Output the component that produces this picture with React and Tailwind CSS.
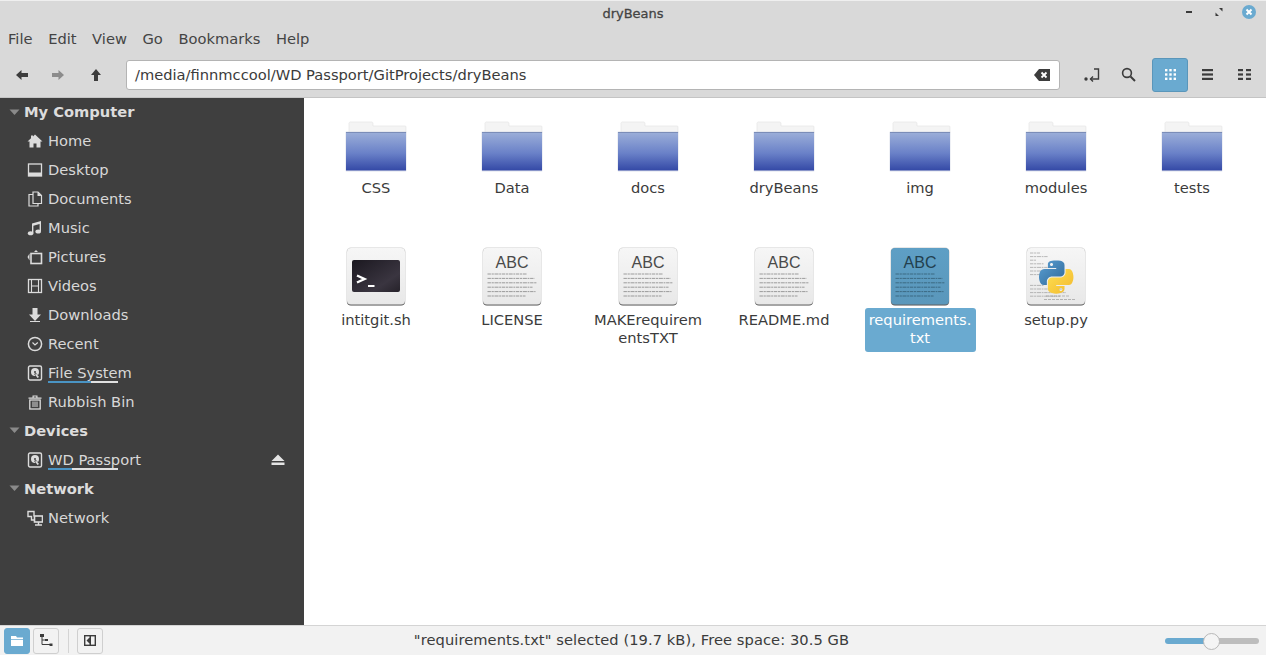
import React from 'react';

const font = { fontFamily: '"DejaVu Sans", sans-serif' };

// Folder icon, drawn in a 64x64 box
const FolderIcon = ({ id }) => (
  <svg width="64" height="64" viewBox="0 0 64 64">
    <defs>
      <linearGradient id={`folder-${id}`} x1="0" y1="0" x2="0" y2="1">
        <stop offset="0" stopColor="#9cafd9" />
        <stop offset="0.55" stopColor="#6a81c8" />
        <stop offset="1" stopColor="#3449a6" />
      </linearGradient>
    </defs>
    <path d="M5 11.5 a1.5 1.5 0 0 1 1.5-1.5 H27.5 a1.5 1.5 0 0 1 1.5 1.5 V14 H61 a1 1 0 0 1 1 1 V21 H5 Z" fill="#f4f4f4" stroke="#e2e2e2" strokeWidth="0.6" />
    <rect x="1.5" y="19.5" width="61" height="40" rx="1" fill="#c9cfdf" opacity="0.6" />
    <rect x="2" y="20" width="60" height="38.5" fill={`url(#folder-${id})`} />
    <rect x="2" y="20" width="60" height="1" fill="#7b8db8" />
  </svg>
);

// Rounded white tile shared by the file icons
const Tile = ({ fill = '#f6f6f6', fillEnd = '#e8e8e8', id, children }) => (
  <svg width="64" height="64" viewBox="0 0 64 64">
    <defs>
      <linearGradient id={`tile-${id}`} x1="0" y1="0" x2="0" y2="1">
        <stop offset="0" stopColor={fill} />
        <stop offset="1" stopColor={fillEnd} />
      </linearGradient>
    </defs>
    <rect x="2.5" y="3.5" width="59" height="58" rx="4.5" fill="#bbbbbb" opacity="0.7" />
    <rect x="3" y="4.5" width="58" height="57" rx="4" fill="#4d4d4d" opacity="0.85" />
    <rect x="3" y="4" width="58" height="56.5" rx="4" fill={`url(#tile-${id})`} />
    {children}
  </svg>
);

const TextLines = ({ color, widths, startY = 30, step = 4.4, x = 7.5, opacity = 0.6 }) => (
  <g stroke={color} strokeWidth="1" strokeDasharray="3.4 0.7 2.2 0.7 4 0.7 1.8 0.7" opacity={opacity}>
    {widths.map((w, i) => (
      <line key={i} x1={x} x2={x + w} y1={startY + i * step} y2={startY + i * step} />
    ))}
  </g>
);

const TextFileIcon = ({ id, selected }) => (
  <Tile id={id} fill={selected ? '#5e9fc5' : '#f6f6f6'} fillEnd={selected ? '#5a97bb' : '#e8e8e8'}>
    <text x="32" y="24" textAnchor="middle" fontSize="16" fill={selected ? '#22404f' : '#4a4a4a'} style={{ fontFamily: '"Liberation Sans", sans-serif' }}>ABC</text>
    <TextLines color={selected ? '#274a5c' : '#666666'} widths={[39, 47, 49, 45, 48, 38]} />
  </Tile>
);

const ScriptIcon = () => (
  <Tile id="sh">
    <defs>
      <linearGradient id="term" x1="0" y1="0" x2="1" y2="1">
        <stop offset="0" stopColor="#1b1820" />
        <stop offset="0.7" stopColor="#3a3540" />
        <stop offset="1" stopColor="#26222a" />
      </linearGradient>
    </defs>
    <rect x="8" y="16" width="48" height="32" rx="2" fill="url(#term)" />
    <path d="M13 31.5 L20.5 35 L13 38.5" fill="none" stroke="#fff" strokeWidth="2.4" />
    <rect x="24" y="41" width="6.5" height="2" fill="#fff" />
  </Tile>
);

const PythonIcon = () => (
  <Tile id="py">
    <defs>
      <linearGradient id="py-blue" x1="0" y1="0" x2="1" y2="1">
        <stop offset="0" stopColor="#5a9fd4" />
        <stop offset="1" stopColor="#306998" />
      </linearGradient>
      <linearGradient id="py-yellow" x1="0" y1="0" x2="1" y2="1">
        <stop offset="0" stopColor="#ffe052" />
        <stop offset="1" stopColor="#f2b92e" />
      </linearGradient>
    </defs>
    <TextLines color="#888888" widths={[10, 18, 6, 14, 26, 34, 28, 0, 0, 14, 32, 36, 30]} startY={9} step={3.6} x={6} opacity={0.55} />
    <g stroke="#888888" strokeWidth="1" strokeDasharray="3 1" opacity="0.55">
      <line x1="22" x2="46" y1="52" y2="52" />
      <line x1="20" x2="52" y1="55.5" y2="55.5" />
    </g>
    <g transform="translate(15 16.5) scale(0.31 0.295)">
      <path fill="url(#py-blue)" d="M54.918785,0.00091927 C50.335132,0.02221727 45.957846,0.41313697 42.106285,1.0946693 30.760069,3.0991731 28.700036,7.2947714 28.700035,15.032169 v10.21875 h26.8125 v3.40625 h-26.8125 -10.0625 c-7.792459,0 -14.6157588,4.683717 -16.7499998,13.59375 -2.46181998,10.212966 -2.57101508,16.586023 0,27.25 1.9059283,7.937852 6.4575432,13.593748 14.2499998,13.59375 h9.21875 v-12.25 c0,-8.849902 7.657144,-16.656248 16.75,-16.65625 h26.78125 c7.454951,0 13.406253,-6.138164 13.40625,-13.625 v-25.53125 c0,-7.2663386 -6.12998,-12.7247771 -13.40625,-13.9374997 C64.281548,0.32794397 59.502438,-0.02037903 54.918785,0.00091927 Z m-14.5,8.21875 c2.769547,0 5.03125,2.2986456 5.03125,5.1249996 -2e-6,2.816336 -2.261703,5.09375 -5.03125,5.09375 -2.779476,-1e-6 -5.03125,-2.277415 -5.03125,-5.09375 -1e-6,-2.826353 2.251774,-5.1249996 5.03125,-5.1249996 Z" />
      <path fill="url(#py-yellow)" d="M85.637535,28.657169 v11.90625 c0,9.230755 -7.825895,16.999999 -16.75,17 h-26.78125 c-7.335833,0 -13.406249,6.278483 -13.40625,13.625 v25.531247 c0,7.266344 6.318588,11.540324 13.40625,13.625004 8.487331,2.49561 16.626237,2.94663 26.78125,0 6.750155,-1.95439 13.406253,-5.88761 13.40625,-13.625004 V86.500919 h-26.78125 v-3.40625 h26.78125 13.406254 c7.792461,0 10.696251,-5.435408 13.406241,-13.59375 2.79933,-8.398886 2.74022,-16.475776 0,-27.25 -1.92578,-7.757441 -5.60387,-13.59375 -13.406241,-13.59375 Z m-15.0625,64.65625 c2.779478,3e-6 5.03125,2.277417 5.03125,5.093747 -2e-6,2.826354 -2.251775,5.125004 -5.03125,5.125004 -2.76955,0 -5.03125,-2.29865 -5.03125,-5.125004 2e-6,-2.81633 2.261697,-5.093747 5.03125,-5.093747 Z" />
    </g>
  </Tile>
);

// Sidebar glyphs, 16x16
const Glyph = ({ children, size = 16, vb = '0 0 16 16' }) => (
  <svg width={size} height={size} viewBox={vb} fill="#dcdcdc" className="shrink-0">{children}</svg>
);

const diskGlyph = (
  <>
    <rect x="1.5" y="1" width="13" height="14" rx="1.5" fill="none" stroke="#dcdcdc" strokeWidth="1.4" />
    <circle cx="8" cy="7" r="4" />
    <circle cx="8" cy="7" r="1" fill="#3f3f3f" />
    <path d="M7 9 L10 12.5 L11.5 11 L9 8 Z" fill="#3f3f3f" />
    <path d="M8 9.5 L10.5 13 L12 12 L9.5 9 Z" />
  </>
);

const sidebarIcons = {
  home: <path d="M8 1.5 L15.5 8.5 H13.5 V14.5 H9.5 V10.5 H6.5 V14.5 H2.5 V8.5 H0.5 L4 5.2 V2.5 H6 V3.4 Z" />,
  desktop: <><rect x="1.5" y="2" width="13" height="12" fill="none" stroke="#dcdcdc" strokeWidth="1.3" /><rect x="2" y="10.5" width="12" height="3.5" /></>,
  documents: <><path d="M6 1 H11 L14.5 4.5 V12.5 H6 Z" fill="none" stroke="#dcdcdc" strokeWidth="1.2" /><path d="M10.5 1 V5 H14.5 Z" /><path d="M6 3.5 H2 V15 H11 V12.5" fill="none" stroke="#dcdcdc" strokeWidth="1.2" /></>,
  music: <><path d="M5 3.5 L14 1 V11 H12.6 V4 L6.4 5.7 V13 H5 Z" /><ellipse cx="3.6" cy="13.2" rx="2.8" ry="2" /><ellipse cx="11.2" cy="11.4" rx="2.8" ry="2" /></>,
  pictures: <><rect x="4" y="4.5" width="10.5" height="10" fill="none" stroke="#dcdcdc" strokeWidth="1.6" /><path d="M7 3 L9 1 L11 3 Z" /><path d="M2.5 4.5 V11.5 L0.5 8 Z" /></>,
  videos: <><rect x="1.5" y="1.5" width="13" height="13" fill="none" stroke="#dcdcdc" strokeWidth="1.3" /><path d="M4.5 1.5 V14.5 M11.5 1.5 V14.5 M5 8 H11" stroke="#dcdcdc" strokeWidth="1.1" /></>,
  downloads: <path d="M5.5 1 H10.5 V7.5 H14 L8 14 L2 7.5 H5.5 Z M3 14 H13 V15 H3 Z" />,
  recent: <><circle cx="8" cy="8" r="6.6" fill="none" stroke="#dcdcdc" strokeWidth="1.5" /><path d="M5.5 6.5 L8 9 L10.8 6.5" fill="none" stroke="#dcdcdc" strokeWidth="1.2" /></>,
  disk: diskGlyph,
  trash: <><path d="M1.5 3.5 H14.5 V4.8 H1.5 Z M5.5 3.5 V1.5 H10.5 V3.5 H9.3 V2.6 H6.7 V3.5 Z" /><rect x="2.8" y="6" width="10.4" height="9" fill="none" stroke="#dcdcdc" strokeWidth="1.3" /><path d="M6 7.5 V13 M8 7.5 V13 M10 7.5 V13" stroke="#dcdcdc" strokeWidth="1" /></>,
  network: <><path d="M7 6.5 V1.5 H1 V6.5 H4.5 V10 H7" fill="none" stroke="#dcdcdc" strokeWidth="1.4" /><rect x="7.5" y="6" width="8" height="6" fill="none" stroke="#dcdcdc" strokeWidth="1.6" /><path d="M11.5 12 V14.5 M8 15 H15" stroke="#dcdcdc" strokeWidth="1.4" /></>,
};

const Arrow = () => (
  <svg width="11" height="7" viewBox="0 0 11 7" className="shrink-0"><path d="M0.5 0.5 H10.5 L5.5 6 Z" fill="#8a8a8a" /></svg>
);

const SidebarHeader = ({ label, first }) => (
  <div className={`flex items-center pl-[9px] gap-[4px] font-bold text-[#dcdcdc] ${first ? 'h-[28px]' : 'h-[29px]'}`}>
    <Arrow />
    <span>{label}</span>
  </div>
);

const SidebarRow = ({ icon, label, usage, eject }) => (
  <div className="flex items-center h-[29px] pl-[27px] pr-[19px] gap-[5px] text-[#d8d8d8]">
    <Glyph>{sidebarIcons[icon]}</Glyph>
    <span className="relative flex-1">
      {label}
      {usage !== undefined && (
        <span className="absolute left-0 top-[19px] w-[70px] h-[2px] bg-[#e0e0e0]">
          <span className="block h-full bg-[#4a94c4]" style={{ width: `${usage}%` }} />
        </span>
      )}
    </span>
    {eject && (
      <svg width="14" height="12" viewBox="0 0 14 12" className="shrink-0">
        <path d="M7 0.5 L13.5 7 H0.5 Z M0.5 8.5 H13.5 V11 H0.5 Z" fill="#e4e4e4" />
      </svg>
    )}
  </div>
);

const Sidebar = () => (
  <aside className="w-[304px] bg-[#3f3f3f] shrink-0">
    <SidebarHeader label="My Computer" first />
    <SidebarRow icon="home" label="Home" />
    <SidebarRow icon="desktop" label="Desktop" />
    <SidebarRow icon="documents" label="Documents" />
    <SidebarRow icon="music" label="Music" />
    <SidebarRow icon="pictures" label="Pictures" />
    <SidebarRow icon="videos" label="Videos" />
    <SidebarRow icon="downloads" label="Downloads" />
    <SidebarRow icon="recent" label="Recent" />
    <SidebarRow icon="disk" label="File System" usage={62} />
    <SidebarRow icon="trash" label="Rubbish Bin" />
    <SidebarHeader label="Devices" />
    <SidebarRow icon="disk" label="WD Passport" usage={34} eject />
    <SidebarHeader label="Network" />
    <SidebarRow icon="network" label="Network" />
  </aside>
);

const files = [
  { name: 'CSS', icon: <FolderIcon id="css" /> },
  { name: 'Data', icon: <FolderIcon id="data" /> },
  { name: 'docs', icon: <FolderIcon id="docs" /> },
  { name: 'dryBeans', icon: <FolderIcon id="drybeans" /> },
  { name: 'img', icon: <FolderIcon id="img" /> },
  { name: 'modules', icon: <FolderIcon id="modules" /> },
  { name: 'tests', icon: <FolderIcon id="tests" /> },
  { name: 'intitgit.sh', icon: <ScriptIcon /> },
  { name: 'LICENSE', icon: <TextFileIcon id="license" /> },
  { name: 'MAKErequirementsTXT', icon: <TextFileIcon id="make" /> },
  { name: 'README.md', icon: <TextFileIcon id="readme" /> },
  { name: 'requirements.\ntxt', icon: <TextFileIcon id="req" selected />, selected: true },
  { name: 'setup.py', icon: <PythonIcon /> },
];

const FileItem = ({ file }) => (
  <div className="flex flex-col items-center">
    {file.icon}
    <div className={`w-[111px] px-px pt-[3px] pb-[5px] rounded-[3px] text-center leading-[18px] break-all whitespace-pre-line ${file.selected ? 'bg-[#6aaad0] text-white' : 'text-[#3b3b3b]'}`}>
      {file.name}
    </div>
  </div>
);

const ToolButton = ({ children, active }) => (
  <div className={`flex items-center justify-center w-[36px] h-[34px] rounded-[3px] ${active ? 'bg-[#6aaad0] border border-[#5a96ba]' : ''}`}>
    {children}
  </div>
);

const StatusButton = ({ children, active }) => (
  <div className={`flex items-center justify-center w-[26px] h-[26px] rounded-[3px] border ${active ? 'bg-[#6aaad0] border-[#6aaad0]' : 'border-[#cfcfcf] bg-[#f2f2f2]'}`}>
    {children}
  </div>
);

export default function App() {
  return (
    <div className="flex flex-col h-[655px] w-[1266px] overflow-hidden bg-white text-[14.67px]" style={font}>
      {/* Title bar */}
      <header className="relative flex items-center justify-center h-[26px] bg-[#d9d9d9] border-t border-[#efefef]">
        <span className="text-[13px] font-medium text-[#444444] [-webkit-text-stroke:0.3px_#444444]">dryBeans</span>
        <div className="absolute right-[10px] top-[4px] flex items-center">
          <svg width="8" height="8" viewBox="0 0 8 8" className="mr-[22px]"><rect x="1" y="3" width="6" height="2" fill="#3a3a3a" /></svg>
          <svg width="8" height="8" viewBox="0 0 8 8" className="mr-[19px]"><path d="M4 0 H7.5 V3.5 Z M0.5 4.5 L4 8 H0.5 Z" fill="#3a3a3a" /></svg>
          <svg width="14" height="14" viewBox="0 0 14 14">
            <circle cx="7" cy="7" r="7" fill="#6aaad0" />
            <path d="M4.5 4.5 L9.5 9.5 M9.5 4.5 L4.5 9.5" stroke="#fff" strokeWidth="2" />
          </svg>
        </div>
      </header>

      {/* Menu bar */}
      <nav className="flex items-center h-[26px] pl-2 gap-[15.6px] bg-[#d9d9d9] text-[#444444]">
        <span>File</span>
        <span>Edit</span>
        <span>View</span>
        <span>Go</span>
        <span>Bookmarks</span>
        <span>Help</span>
      </nav>

      {/* Toolbar */}
      <div className="flex items-center h-[46px] pl-[4px] pr-[4px] bg-[#d9d9d9] border-b border-[#c4c4c4]">
        <ToolButton>
          <svg width="12" height="10" viewBox="0 0 12 10"><path d="M0 5 L5.5 0 V3 H12 V7 H5.5 V10 Z" fill="#3c3c3c" /></svg>
        </ToolButton>
        <ToolButton>
          <svg width="12" height="10" viewBox="0 0 12 10"><path d="M12 5 L6.5 0 V3 H0 V7 H6.5 V10 Z" fill="#8c8c8c" /></svg>
        </ToolButton>
        <div className="ml-[2px]">
          <ToolButton>
            <svg width="10" height="12" viewBox="0 0 10 12"><path d="M5 0 L10 6 H7 V12 H3 V6 H0 Z" fill="#3c3c3c" /></svg>
          </ToolButton>
        </div>
        <div className="flex items-center flex-1 h-[30px] ml-[12px] mr-[14px] pl-[8px] pr-[9px] bg-white border border-[#b4b4b4] rounded-[3px] text-[#3b3b3b]">
          <span className="flex-1">/media/finnmccool/WD Passport/GitProjects/dryBeans</span>
          <svg width="16" height="12" viewBox="0 0 16 12">
            <path d="M5 0 H16 V12 H5 L0 6 Z" fill="#3c3c3c" />
            <path d="M7.5 3.5 L12.5 8.5 M12.5 3.5 L7.5 8.5" stroke="#fff" strokeWidth="1.8" />
          </svg>
        </div>
        <ToolButton>
          <svg width="16" height="14" viewBox="0 0 16 14" fill="none" stroke="#3c3c3c">
            <circle cx="2" cy="11" r="1.7" fill="#3c3c3c" stroke="none" />
            <path d="M10 1 H14.5 V11 H6.5" strokeWidth="1.4" />
            <path d="M9 8.5 L6.5 11 L9 13.5" strokeWidth="1.4" />
          </svg>
        </ToolButton>
        <ToolButton>
          <svg width="15" height="15" viewBox="0 0 15 15" fill="none" stroke="#3c3c3c">
            <circle cx="6" cy="6" r="4.4" strokeWidth="1.6" />
            <path d="M9.5 9.5 L14 14" strokeWidth="2" />
          </svg>
        </ToolButton>
        <div className="flex items-center gap-px ml-[6px]">
          <ToolButton active>
            <svg width="11" height="11" viewBox="0 0 11 11" fill="#fff">
              <rect x="0" y="0" width="2.4" height="2.4" /><rect x="4.3" y="0" width="2.4" height="2.4" /><rect x="8.6" y="0" width="2.4" height="2.4" />
              <rect x="0" y="4.3" width="2.4" height="2.4" /><rect x="4.3" y="4.3" width="2.4" height="2.4" /><rect x="8.6" y="4.3" width="2.4" height="2.4" />
              <rect x="0" y="8.6" width="2.4" height="2.4" /><rect x="4.3" y="8.6" width="2.4" height="2.4" /><rect x="8.6" y="8.6" width="2.4" height="2.4" />
            </svg>
          </ToolButton>
          <ToolButton>
            <svg width="11" height="11" viewBox="0 0 11 11" fill="#3c3c3c">
              <rect width="11" height="2.2" /><rect y="4.4" width="11" height="2.2" /><rect y="8.8" width="11" height="2.2" />
            </svg>
          </ToolButton>
          <ToolButton>
            <svg width="13" height="11" viewBox="0 0 13 11" fill="#3c3c3c">
              <rect width="5" height="2.2" /><rect x="8" width="5" height="2.2" />
              <rect y="4.4" width="5" height="2.2" /><rect x="8" y="4.4" width="5" height="2.2" />
              <rect y="8.8" width="5" height="2.2" /><rect x="8" y="8.8" width="5" height="2.2" />
            </svg>
          </ToolButton>
        </div>
      </div>

      {/* Body */}
      <div className="flex flex-1 min-h-0">
        <Sidebar />
        <main className="flex-1 bg-white pt-[14px] pl-[4px]">
          <div className="grid grid-cols-[repeat(7,136px)] auto-rows-[132px]">
            {files.map(file => <FileItem key={file.name} file={file} />)}
          </div>
        </main>
      </div>

      {/* Status bar */}
      <footer className="flex items-center h-[30px] pl-[4px] pr-[7px] bg-[#f2f2f2] border-t border-[#d4d4d4] text-[#3b3b3b]">
        <div className="flex items-center gap-[3px]">
          <StatusButton active>
            <svg width="12" height="10" viewBox="0 0 12 10" fill="#fff"><path d="M0 0 H5 L6 1.5 H12 V3 H0 Z M0 3.8 H12 V10 H0 Z" /></svg>
          </StatusButton>
          <StatusButton>
            <svg width="13" height="13" viewBox="0 0 13 13" fill="#3c3c3c">
              <rect x="0" y="0" width="4" height="3" /><rect x="5" y="5" width="3" height="2" /><rect x="9.5" y="9.5" width="3" height="2.5" />
              <path d="M2 3 V10.5 H10 M2 6 H5" fill="none" stroke="#3c3c3c" />
            </svg>
          </StatusButton>
          <span className="w-px h-[24px] ml-[6px] mr-[5px] bg-[#d4d4d4]" />
          <StatusButton>
            <svg width="12" height="11" viewBox="0 0 12 11" fill="none">
              <rect x="0.7" y="0.7" width="10.6" height="9.6" stroke="#3c3c3c" strokeWidth="1.4" />
              <path d="M5.5 2.5 L2.5 5.5 L5.5 8.5 Z M5.5 1 H7 V10 H5.5 Z" fill="#3c3c3c" />
            </svg>
          </StatusButton>
        </div>
        <span className="flex-1 text-center pr-[5px] pb-[2px] tracking-[0.07px]">"requirements.txt" selected (19.7 kB), Free space: 30.5 GB</span>
        <div className="relative flex w-[94px] h-[6px]">
          <span className="w-[47px] bg-[#6aaad0] rounded-l-full" />
          <span className="flex-1 bg-[#bdbdbd] rounded-r-full" />
          <span className="absolute left-[38px] top-[-5px] w-[17px] h-[17px] rounded-full bg-[#f4f4f4] border border-[#b8b8b8]" />
        </div>
      </footer>
    </div>
  );
}
